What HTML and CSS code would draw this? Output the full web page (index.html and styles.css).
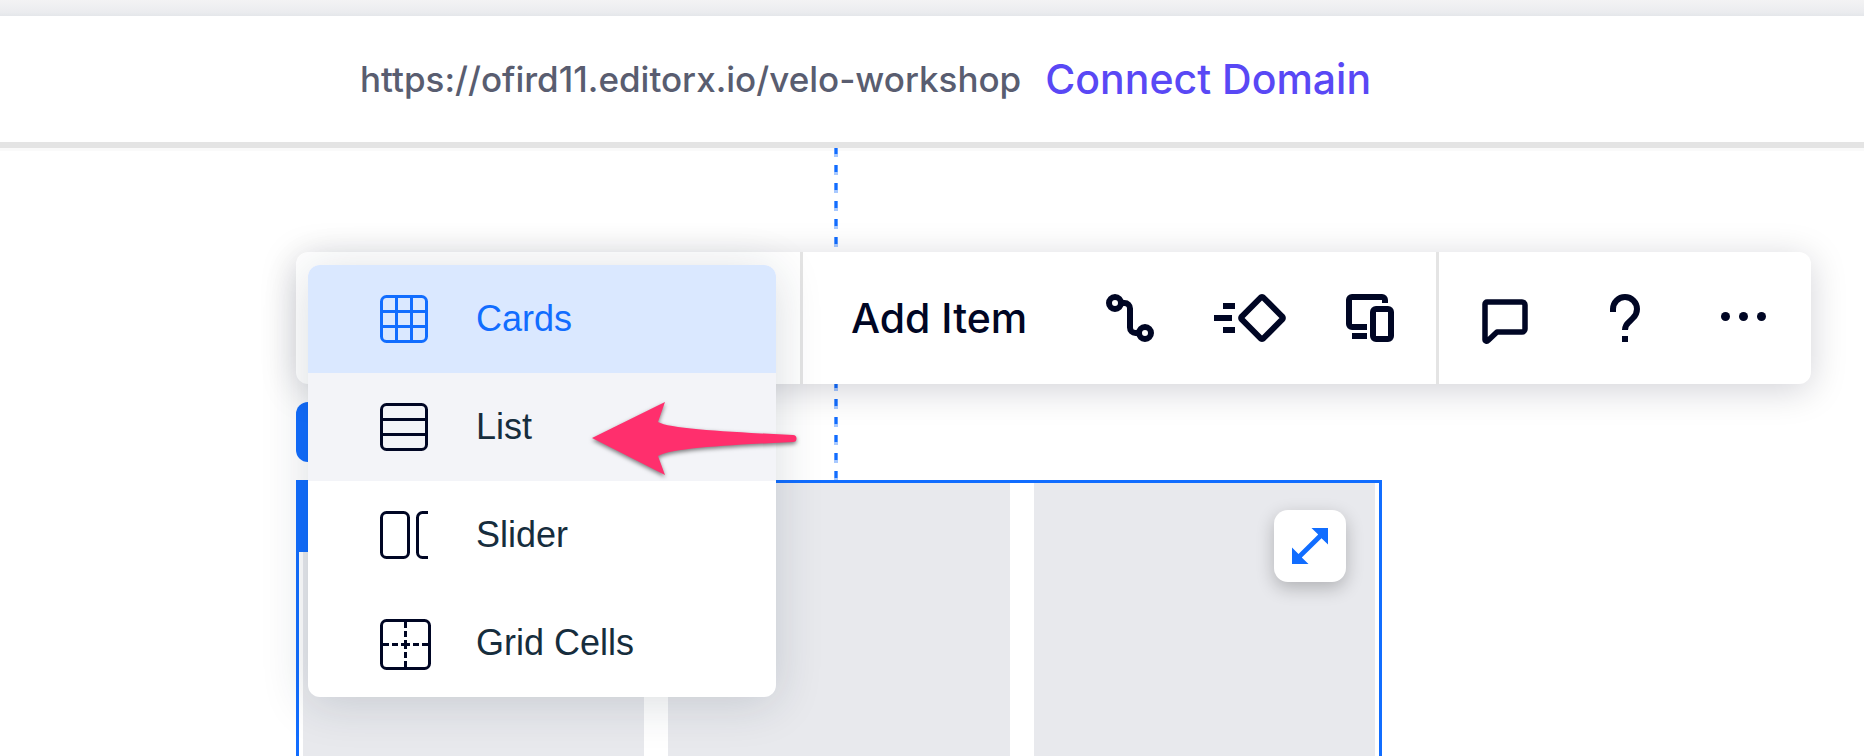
FILE: index.html
```html
<!DOCTYPE html>
<html lang="en">
<head>
<meta charset="utf-8">
<title>Velo Workshop</title>
<link rel="stylesheet" href="styles.css">
</head>
<body>
<div class="window-edge"></div>
<header class="site-bar">
  <span class="site-url">https://ofird11.editorx.io/velo-workshop</span>
  <a class="connect-link" href="#">Connect Domain</a>
</header>
<main class="canvas">
  <svg class="guide" aria-hidden="true"><line x1="2" y1="-1" x2="2" y2="332" stroke="#a8c9ff" stroke-width="4" stroke-dasharray="10 8"/><line x1="2" y1="-1" x2="2" y2="332" stroke="#116dff" stroke-width="3" stroke-dasharray="7 11"/></svg>
  <div class="toolbar" role="toolbar" aria-label="Element actions">
    <div class="group group-layout">
      <div class="menu" role="menu">
        <button class="item item-selected" role="menuitem"><svg class="item-icon" viewBox="0 0 51 48"><rect x="1.5" y="1.5" width="45" height="45" rx="5"/><path d="M16.500 2v44M31.500 2v44M2 16.500h44M2 31.500h44"/></svg>Cards</button>
        <button class="item item-hover" role="menuitem"><svg class="item-icon" viewBox="0 0 51 48"><rect x="1.5" y="1.5" width="45" height="45" rx="5"/><path d="M2 16.500h44M2 31.500h44"/></svg>List</button>
        <button class="item" role="menuitem"><svg class="item-icon" viewBox="0 0 51 48"><rect x="1.500" y="1.500" width="27" height="45" rx="5"/><path d="M48 1.500h-5.500a5 5 0 0 0-5 5v35a5 5 0 0 0 5 5H48"/></svg>Slider</button>
        <button class="item" role="menuitem"><svg class="item-icon" viewBox="0 0 51 48"><rect x="1.500" y="1.500" width="48" height="48" rx="5"/><path d="M25.500 3v6M25.500 12v6M25.500 21v9M25.500 33v6M25.500 42v6M3 25.500h6M12 25.500h6M21 25.500h9M33 25.500h6M42 25.500h6"/></svg>Grid Cells</button>
      </div>
    </div>
    <div class="group group-edit">
      <button class="add-item">Add Item</button>
      <button class="tool" aria-label="Connect"><svg width="48" height="48" viewBox="0 0 48 48"><circle cx="9" cy="9" r="6"/><circle cx="39" cy="39" r="6"/><path d="M15 9h3.500a5.500 5.500 0 0 1 5.500 5.500v19a5.500 5.500 0 0 0 5.500 5.500H33"/></svg></button>
      <button class="tool" aria-label="Interactions"><svg width="72" height="48" viewBox="0 0 72 48"><path d="M9 12h12M0 24h18M9 36h12"/><path d="M46.500 3.800a2 2 0 0 1 3 0L68.200 22.500a2 2 0 0 1 0 3L49.500 44.200a2 2 0 0 1-3 0L27.800 25.500a2 2 0 0 1 0-3Z"/></svg></button>
      <button class="tool" aria-label="Responsive behavior"><svg width="48" height="48" viewBox="0 0 48 48"><path d="M39 9V6a3 3 0 0 0-3-3H6a3 3 0 0 0-3 3v24a3 3 0 0 0 3 3h15M6 42h15"/><rect x="27" y="15" width="18" height="30" rx="3"/></svg></button>
    </div>
    <div class="group group-help">
      <button class="tool" aria-label="Comment"><svg width="46" height="48" viewBox="0 0 46 48"><path stroke-width="5.500" stroke-linejoin="round" d="M5 8h35a3 3 0 0 1 3 3v24a3 3 0 0 1-3 3H15l-9 8.500a1.700 1.700 0 0 1-3-1V10a2 2 0 0 1 2-2Z"/></svg></button>
      <button class="tool" aria-label="Help"><svg width="30" height="48" viewBox="0 0 30 48"><path d="M3 18v-3a12 12 0 0 1 24 0c0 4-1.500 6.500-4 9l-4 4c-3 2.500-4 4.500-4 8M15 42v6"/></svg></button>
      <button class="tool" aria-label="More actions"><svg width="45" height="48" viewBox="0 0 45 48"><g fill="currentColor" stroke="none"><circle cx="4.500" cy="22.500" r="4.500"/><circle cx="22.500" cy="22.500" r="4.500"/><circle cx="40.500" cy="22.500" r="4.500"/></g></svg></button>
    </div>
  </div>
  <div class="element-label"></div>
  <section class="repeater" aria-label="Repeater">
    <div class="handle"></div>
    <div class="card"></div>
    <div class="card"></div>
    <div class="card"></div>
    <button class="expand" aria-label="Stretch"><svg width="36" height="36" viewBox="0 0 36 36"><path fill="#116dff" d="M19.500 0H36v16.500L29.500 10.200 9.800 29.500 16.500 36H0V19.500l6.500 6.500L26.200 6.500Z"/></svg></button>
  </section>
  <svg class="pointer" viewBox="0 0 208 76" aria-hidden="true"><path d="M0 36 73 0 66 20C78 27 140 30 201 33a3.500 3.500 0 0 1 0 7C140 43 80 46 66 54L73 73Z"/></svg>
</main>
</body>
</html>
```
FILE: styles.css
```css
* {
  box-sizing: border-box;
}

body {
  margin: 0;
  min-height: 100vh;
  display: flex;
  flex-direction: column;
  background: #fff;
  color: #000624;
  font-family: "Liberation Sans", Arial, sans-serif;
  font-size: 36px;
}

button {
  border: 0;
  padding: 0;
  background: none;
  color: inherit;
  font: inherit;
  cursor: pointer;
}

svg {
  display: block;
  overflow: visible;
}

.window-edge {
  height: 16px;
  background: linear-gradient(#f3f3f4, #ebecef 75%, #e4e6ea);
}

.site-bar {
  display: flex;
  align-items: center;
  gap: 24px;
  height: 132px;
  padding: 0 24px 0 360px;
  border-bottom: 6px solid #e4e4e4;
  box-shadow: 0 3px 0 #fafafa;
  font-family: Inter, "Liberation Sans", sans-serif;
  font-weight: 500;
  white-space: nowrap;
}

.site-url {
  color: #595d70;
  font-size: 35px;
}

.connect-link {
  color: #5948f5;
  font-size: 41px;
  text-decoration: none;
}

.canvas {
  position: relative;
  flex: 1;
  display: flex;
  flex-direction: column;
  padding: 104px 53px 0 296px;
  overflow: hidden;
}

.guide {
  position: absolute;
  left: 834px;
  top: 0;
  width: 4px;
  height: 332px;
  overflow: hidden;
}

.toolbar {
  position: relative;
  z-index: 2;
  display: flex;
  height: 132px;
  border-radius: 12px;
  background: #fff;
  box-shadow: 0 6px 36px rgba(0, 6, 36, 0.18);
}

.group {
  display: flex;
  align-items: center;
}

.group + .group {
  border-left: 3px solid #e4e4e4;
}

.group-layout {
  width: 504px;
}

.group-edit {
  width: 636px;
  gap: 60px;
  padding: 0 42px 0 48px;
}

.group-help {
  flex: 1;
  justify-content: space-between;
  padding: 0 45px 0 43px;
}

.add-item {
  margin-right: auto;
  font-family: Inter, "Liberation Sans", sans-serif;
  font-size: 41px;
  font-weight: 500;
  white-space: nowrap;
}

.tool svg {
  fill: none;
  stroke: currentColor;
  stroke-width: 6;
}

.menu {
  position: absolute;
  left: 12px;
  top: 13px;
  width: 468px;
  border-radius: 12px;
  background: #fff;
  box-shadow: 0 6px 48px rgba(22, 45, 61, 0.16);
  overflow: hidden;
}

.item {
  display: flex;
  align-items: center;
  gap: 45px;
  width: 100%;
  height: 108px;
  padding: 0 72px;
  color: #162d3d;
}

.item-selected {
  background: #dae8ff;
  color: #116dff;
}

.item-hover {
  background: #f3f4f8;
}

.item-icon {
  width: 51px;
  height: 48px;
  fill: none;
  stroke: #000624;
  stroke-width: 3;
}

.item-selected .item-icon {
  stroke: #116dff;
}

.element-label {
  width: 120px;
  height: 60px;
  margin: 18px 0;
  border-radius: 12px;
  background: #116dff;
}

.repeater {
  position: relative;
  flex: 1;
  display: flex;
  gap: 24px;
  margin-right: 429px;
  padding: 0 4px;
  border: 3px solid #116dff;
  border-bottom: 0;
}

.card {
  flex: 1;
  background: #e8e9ed;
}

.handle {
  position: absolute;
  left: 0;
  top: 0;
  width: 72px;
  height: 69px;
  background: #116dff;
}

.expand {
  position: absolute;
  right: 33px;
  top: 27px;
  display: grid;
  place-items: center;
  width: 72px;
  height: 72px;
  border-radius: 14px;
  background: #fff;
  box-shadow: 0 6px 18px rgba(0, 0, 0, 0.24);
}

.pointer {
  position: absolute;
  z-index: 3;
  left: 592px;
  top: 254px;
  width: 208px;
  height: 76px;
  fill: #ff2f6d;
  filter: drop-shadow(0 2px 2px rgba(0, 0, 0, 0.5));
}
```
